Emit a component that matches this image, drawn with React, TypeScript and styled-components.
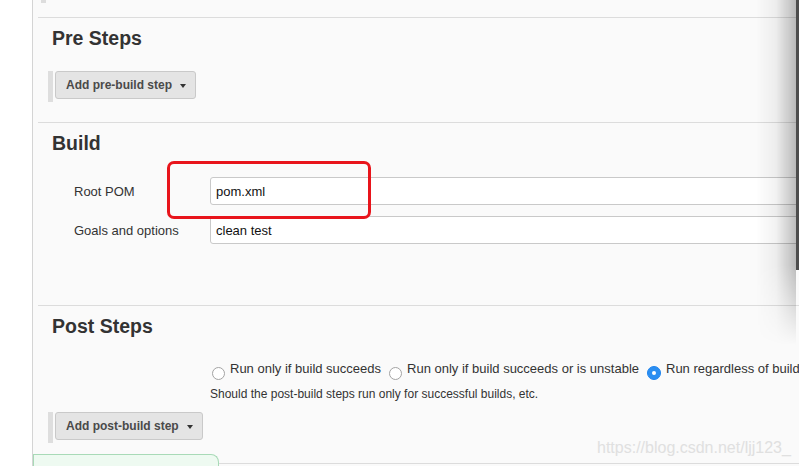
import * as React from 'react';
import styled, { createGlobalStyle } from 'styled-components';

const GlobalStyle = createGlobalStyle`
  html, body {
    margin: 0;
    padding: 0;
    background: #fff;
    font-family: "Liberation Sans", Arial, Helvetica, sans-serif;
  }
  * {
    box-sizing: border-box;
  }
`;

const Screen = styled.div`
  position: relative;
  display: flex;
  width: 799px;
  height: 466px;
  overflow: hidden;
  background: #fff;
`;

const Gutter = styled.div`
  width: 32px;
  flex: none;
  background: #fff;
`;

const Panel = styled.div`
  flex: 1;
  display: flex;
  flex-direction: column;
  border-left: 1px solid #d4d4d4;
  background: #fafafa;
  > * {
    flex-shrink: 0;
  }
`;

const TopStrip = styled.div`
  height: 17px;
  padding-left: 8px;
`;

const TopStub = styled.div`
  width: 5px;
  height: 3px;
  background: #dddddd;
`;

const Section = styled.section<{ $bottom: number }>`
  position: relative;
  margin-left: 5px;
  padding: 8px 0 ${p => p.$bottom}px 10px;
  border-top: 1px solid #dcdcdc;
`;

const Heading = styled.h2`
  margin: 0 0 0 4px;
  font-size: 19.5px;
  line-height: 24px;
  font-weight: bold;
  color: #333;
`;

const StepRow = styled.div<{ $top: number }>`
  display: flex;
  align-items: flex-start;
  height: 31px;
  margin-top: ${p => p.$top}px;
`;

const StepBar = styled.div`
  width: 5px;
  height: 31px;
  background: #dedede;
`;

const StepButton = styled.button`
  display: flex;
  align-items: center;
  gap: 8px;
  height: 28px;
  margin-left: 2px;
  padding: 0 9px 0 10px;
  border: 1px solid #c9c9c9;
  border-radius: 3px;
  background: #e4e4e4;
  font-family: inherit;
  font-size: 12px;
  font-weight: bold;
  color: #4a4a4a;
`;

const Caret = styled.span`
  width: 0;
  height: 0;
  border-left: 3.5px solid transparent;
  border-right: 3.5px solid transparent;
  border-top: 4px solid #333;
  margin-top: 1px;
`;

const FieldList = styled.div`
  display: flex;
  flex-direction: column;
  gap: 11px;
  margin-top: 22px;
`;

const FieldRow = styled.div`
  display: flex;
  align-items: center;
  margin-left: 26px;
`;

const FieldLabel = styled.label`
  width: 136px;
  flex: none;
  font-size: 13px;
  color: #333;
`;

const TextInput = styled.input`
  flex: 1;
  min-width: 0;
  height: 28px;
  padding: 0 5px;
  border: 1px solid #c9c9c9;
  border-radius: 3px;
  background: #fff;
  font-family: inherit;
  font-size: 13px;
  color: #111;
  outline: none;
`;

const Highlight = styled.div`
  position: absolute;
  left: 129px;
  top: 38px;
  width: 204px;
  height: 58px;
  border: 3px solid #e8141b;
  border-radius: 7px;
  pointer-events: none;
`;

const RadioRow = styled.div`
  display: flex;
  align-items: flex-start;
  height: 20px;
  margin: 22px 0 0 162px;
  white-space: nowrap;
`;

const RadioOption = styled.label`
  display: flex;
  align-items: flex-start;
  gap: 5px;
  margin-right: 6px;
  font-size: 13px;
  line-height: 18px;
  color: #333;
`;

const RadioDot = styled.span<{ $checked?: boolean }>`
  position: relative;
  flex: none;
  width: ${p => (p.$checked ? 14 : 13)}px;
  height: ${p => (p.$checked ? 14 : 13)}px;
  margin: ${p => (p.$checked ? 6 : 7)}px 0 0 2px;
  border-radius: 50%;
  border: 1px solid ${p => (p.$checked ? '#1f84ee' : '#a3a3a3')};
  background: ${p => (p.$checked ? '#2b8ef1' : '#fff')};
  &::after {
    content: '';
    display: ${p => (p.$checked ? 'block' : 'none')};
    position: absolute;
    left: 50%;
    top: 50%;
    width: 4px;
    height: 4px;
    margin: -2px 0 0 -2px;
    border-radius: 50%;
    background: #fff;
  }
`;

const Hint = styled.div`
  margin: 7px 0 0 162px;
  font-size: 12px;
  line-height: 15px;
  color: #333;
`;

const Footer = styled.div`
  display: flex;
  align-items: flex-start;
  height: 20px;
`;

const NoticeTab = styled.div`
  width: 186px;
  height: 20px;
  border: 1px solid #a8dab7;
  border-bottom: none;
  border-radius: 0 8px 0 0;
  background: #eefaf1;
`;

const FooterRule = styled.div`
  flex: 1;
  margin-top: 9px;
  border-top: 1px solid #dcdcdc;
`;

const EdgeShadow = styled.div`
  position: absolute;
  top: 0;
  right: 3px;
  width: 40px;
  height: 345px;
  background: linear-gradient(
    to right,
    rgba(0, 0, 0, 0) 0%,
    rgba(0, 0, 0, 0.05) 50%,
    rgba(0, 0, 0, 0.26) 100%
  );
  -webkit-mask-image: linear-gradient(to bottom, #000 0, #000 265px, transparent 345px);
  mask-image: linear-gradient(to bottom, #000 0, #000 265px, transparent 345px);
  pointer-events: none;
`;

const EdgeLine = styled.div`
  position: absolute;
  top: 0;
  right: 0;
  width: 3px;
  height: 270px;
  background: #4d4d4d;
`;

const Watermark = styled.div`
  position: absolute;
  left: 597px;
  top: 438px;
  font-size: 16px;
  line-height: 20px;
  color: #e0e0e0;
  white-space: nowrap;
  pointer-events: none;
`;

interface StepProps {
  label: string;
  top: number;
}

const AddStep = ({ label, top }: StepProps) => (
  <StepRow $top={top}>
    <StepBar />
    <StepButton type="button">
      {label}
      <Caret />
    </StepButton>
  </StepRow>
);

const fields = [
  { label: 'Root POM', value: 'pom.xml' },
  { label: 'Goals and options', value: 'clean test' },
];

const radios = [
  { label: 'Run only if build succeeds', checked: false },
  { label: 'Run only if build succeeds or is unstable', checked: false },
  { label: 'Run regardless of build result', checked: true },
];

export default function App() {
  return (
    <>
      <GlobalStyle />
      <Screen>
        <Gutter />
        <Panel>
          <TopStrip>
            <TopStub />
          </TopStrip>
          <Section $bottom={20}>
            <Heading>Pre Steps</Heading>
            <AddStep label="Add pre-build step" top={21} />
          </Section>
          <Section $bottom={61}>
            <Heading>Build</Heading>
            <FieldList>
              {fields.map(f => (
                <FieldRow key={f.label}>
                  <FieldLabel>{f.label}</FieldLabel>
                  <TextInput readOnly value={f.value} />
                </FieldRow>
              ))}
            </FieldList>
            <Highlight />
          </Section>
          <Section $bottom={11}>
            <Heading>Post Steps</Heading>
            <RadioRow>
              {radios.map(r => (
                <RadioOption key={r.label}>
                  <RadioDot $checked={r.checked} />
                  {r.label}
                </RadioOption>
              ))}
            </RadioRow>
            <Hint>Should the post-build steps run only for successful builds, etc.</Hint>
            <AddStep label="Add post-build step" top={10} />
          </Section>
          <Footer>
            <NoticeTab />
            <FooterRule />
          </Footer>
        </Panel>
        <EdgeShadow />
        <EdgeLine />
        <Watermark>https://blog.csdn.net/ljj123_</Watermark>
      </Screen>
    </>
  );
}
